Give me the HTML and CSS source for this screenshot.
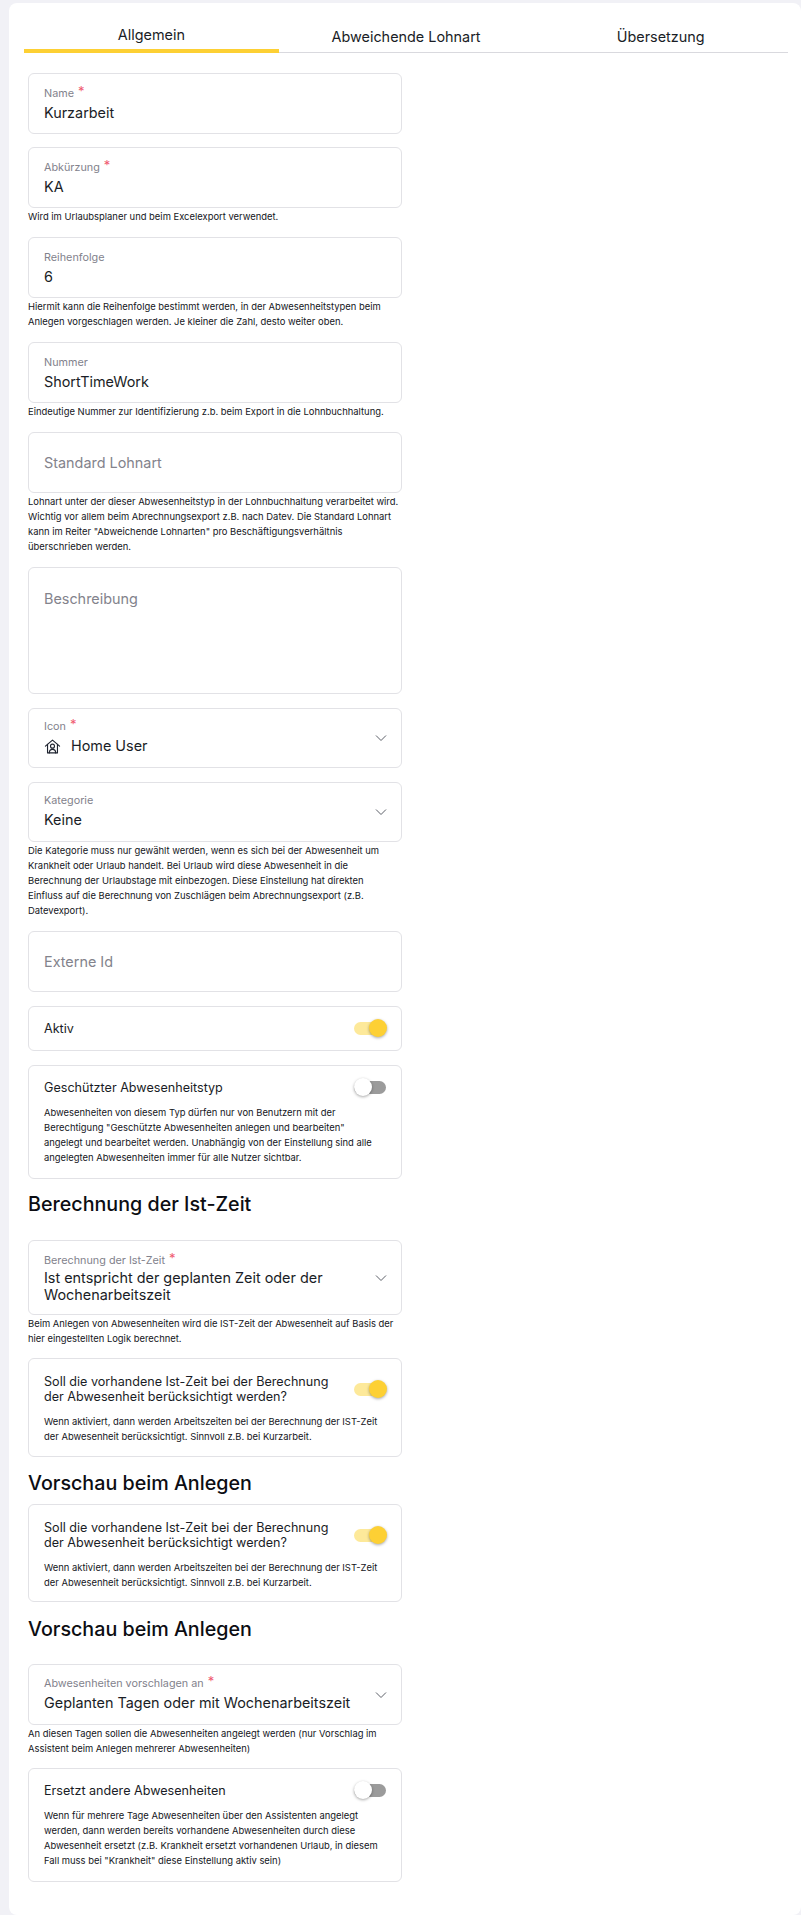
FILE: index.html
```html
<!DOCTYPE html>
<html lang="de">
<head>
<meta charset="utf-8">
<title>Abwesenheitstyp</title>
<link rel="stylesheet" href="styles.css">
</head>
<body>
<main class="card">
  <nav class="tabs">
    <a class="tab active">Allgemein</a>
    <a class="tab">Abweichende Lohnart</a>
    <a class="tab">Übersetzung</a>
  </nav>
  <form class="form">
    <div class="field"><span class="label">Name <i class="req">*</i></span><span class="value">Kurzarbeit</span></div>
    <div class="field mt13"><span class="label">Abkürzung <i class="req">*</i></span><span class="value">KA</span></div>
    <p class="help">Wird im Urlaubsplaner und beim Excelexport verwendet.</p>
    <div class="field mt13"><span class="label">Reihenfolge</span><span class="value">6</span></div>
    <p class="help">Hiermit kann die Reihenfolge bestimmt werden, in der Abwesenheitstypen beim Anlegen vorgeschlagen werden. Je kleiner die Zahl, desto weiter oben.</p>
    <div class="field mt13"><span class="label">Nummer</span><span class="value">ShortTimeWork</span></div>
    <p class="help">Eindeutige Nummer zur Identifizierung z.b. beim Export in die Lohnbuchhaltung.</p>
    <div class="field mt13 empty"><span class="placeholder">Standard Lohnart</span></div>
    <p class="help">Lohnart unter der dieser Abwesenheitstyp in der Lohnbuchhaltung verarbeitet wird. Wichtig vor allem beim Abrechnungsexport z.B. nach Datev. Die Standard Lohnart kann im Reiter "Abweichende Lohnarten" pro Beschäftigungsverhältnis überschrieben werden.</p>
    <div class="field mt13 area"><span class="placeholder">Beschreibung</span></div>
    <div class="field select mt14">
      <div><span class="label">Icon <i class="req">*</i></span>
      <span class="value with-icon">
        <svg class="home" viewBox="0 0 24 24" fill="none" stroke="#1f2430" stroke-width="1.600" stroke-linejoin="round" stroke-linecap="round"><path d="M2 11.500 12 3l10 8.500"/><path d="M5 9v12h14V9"/><circle cx="12" cy="11.500" r="2.800"/><path d="M7.500 21c0-3.500 2-5 4.500-5s4.500 1.500 4.500 5"/></svg>
        Home User</span></div>
      <svg class="chev" viewBox="0 0 12 8"><path d="M1 1.500 6 6.500l5-5"/></svg>
    </div>
    <div class="field select mt14">
      <div><span class="label">Kategorie</span><span class="value">Keine</span></div>
      <svg class="chev" viewBox="0 0 12 8"><path d="M1 1.500 6 6.500l5-5"/></svg>
    </div>
    <p class="help">Die Kategorie muss nur gewählt werden, wenn es sich bei der Abwesenheit um Krankheit oder Urlaub handelt. Bei Urlaub wird diese Abwesenheit in die Berechnung der Urlaubstage mit einbezogen. Diese Einstellung hat direkten<br>Einfluss auf die Berechnung von Zuschlägen beim Abrechnungsexport (z.B.<br>Datevexport).</p>
    <div class="field mt13 empty"><span class="placeholder">Externe Id</span></div>
    <div class="box row mt14"><span class="box-title">Aktiv</span><span class="toggle on"></span></div>
    <div class="box mt14 tall">
      <div class="row"><span class="box-title">Geschützter Abwesenheitstyp</span><span class="toggle"></span></div>
      <p class="box-text">Abwesenheiten von diesem Typ dürfen nur von Benutzern mit der Berechtigung "Geschützte Abwesenheiten anlegen und bearbeiten" angelegt und bearbeitet werden. Unabhängig von der Einstellung sind alle angelegten Abwesenheiten immer für alle Nutzer sichtbar.</p>
    </div>
    <h2 class="heading">Berechnung der Ist-Zeit</h2>
    <div class="field select multi">
      <div><span class="label">Berechnung der Ist-Zeit <i class="req">*</i></span><span class="value two">Ist entspricht der geplanten Zeit oder der Wochenarbeitszeit</span></div>
      <svg class="chev" viewBox="0 0 12 8"><path d="M1 1.500 6 6.500l5-5"/></svg>
    </div>
    <p class="help">Beim Anlegen von Abwesenheiten wird die IST-Zeit der Abwesenheit auf Basis der hier eingestellten Logik berechnet.</p>
    <div class="box mt12 mid h99">
      <div class="row"><span class="box-title wrap">Soll die vorhandene Ist-Zeit bei der Berechnung der Abwesenheit berücksichtigt werden?</span><span class="toggle on"></span></div>
      <p class="box-text">Wenn aktiviert, dann werden Arbeitszeiten bei der Berechnung der IST-Zeit der Abwesenheit berücksichtigt. Sinnvoll z.B. bei Kurzarbeit.</p>
    </div>
    <h2 class="heading small-gap">Vorschau beim Anlegen</h2>
    <div class="box mid">
      <div class="row"><span class="box-title wrap">Soll die vorhandene Ist-Zeit bei der Berechnung der Abwesenheit berücksichtigt werden?</span><span class="toggle on"></span></div>
      <p class="box-text">Wenn aktiviert, dann werden Arbeitszeiten bei der Berechnung der IST-Zeit der Abwesenheit berücksichtigt. Sinnvoll z.B. bei Kurzarbeit.</p>
    </div>
    <h2 class="heading last">Vorschau beim Anlegen</h2>
    <div class="field select h61">
      <div><span class="label">Abwesenheiten vorschlagen an <i class="req">*</i></span><span class="value">Geplanten Tagen oder mit Wochenarbeitszeit</span></div>
      <svg class="chev" viewBox="0 0 12 8"><path d="M1 1.500 6 6.500l5-5"/></svg>
    </div>
    <p class="help">An diesen Tagen sollen die Abwesenheiten angelegt werden (nur Vorschlag im Assistent beim Anlegen mehrerer Abwesenheiten)</p>
    <div class="box mt12 tall">
      <div class="row"><span class="box-title">Ersetzt andere Abwesenheiten</span><span class="toggle"></span></div>
      <p class="box-text">Wenn für mehrere Tage Abwesenheiten über den Assistenten angelegt werden, dann werden bereits vorhandene Abwesenheiten durch diese Abwesenheit ersetzt (z.B. Krankheit ersetzt vorhandenen Urlaub, in diesem Fall muss bei "Krankheit" diese Einstellung aktiv sein)</p>
    </div>
  </form>
</main>
</body>
</html>
```
FILE: styles.css
```css
* { box-sizing: border-box; }
html, body { margin: 0; padding: 0; }
body {
  background: #f1f1f6;
  font-family: Inter, "Liberation Sans", sans-serif;
  color: #1a1d26;
  padding: 3px 0 0 9px;
}
.card {
  background: #fff;
  border-radius: 8px;
  height: 1912px;
  padding: 12px 13px 0 15px;
}
.tabs {
  display: flex;
  width: 764px;
  height: 38px;
  border-bottom: 1px solid #d9d9de;
}
.tab {
  flex: 1;
  text-align: center;
  font-size: 14.400px;
  line-height: 20px;
  padding-top: 12px;
  color: #1a1d26;
}
.tab.active {
  padding-top: 10px;
  border-bottom: 4px solid #fdd034;
  height: 38px;
}
.form { width: 374px; margin: 20px 0 0 4px; }
.field, .box {
  border: 1px solid #e2e2e6;
  border-radius: 6px;
  background: #fff;
}
.field {
  height: 61px;
  padding: 12px 15px 0;
}
.label {
  display: block;
  font-size: 10.800px;
  line-height: 16px;
  color: #82828c;
}
.req { color: #ef5a70; font-style: normal; font-size: 13px; line-height: 0; vertical-align: 1px; margin-left: 1px; }
.value {
  display: block;
  font-size: 14.400px;
  line-height: 22px;
  color: #1a1d26;
}
.value.with-icon { display: flex; align-items: center; gap: 10px; }
.home { width: 17px; height: 17px; }
.placeholder {
  display: block;
  font-size: 14.400px;
  line-height: 22px;
  color: #83838c;
  padding-top: 7px;
}
.area { height: 127px; padding-top: 0; }
.area .placeholder { padding-top: 20px; }
.select { display: flex; justify-content: space-between; align-items: center; padding: 0 14px 0 15px; height: 60px; }
.select.h61 { height: 61px; }
.chev { width: 12px; height: 8px; flex: none; fill: none; stroke: #5c5f68; stroke-width: 1; }
.select.multi { height: 75px; }
.two { width: 300px; line-height: 17px; }
.mt12 { margin-top: 12px; }
.mt13 { margin-top: 13px; }
.mt14 { margin-top: 14px; }
.help {
  margin: 1px 0 0;
  font-size: 9.420px;
  line-height: 15px;
  color: #14161c;
}
.box { padding: 0 15px; }
.box.row { height: 45px; }
.row { display: flex; justify-content: space-between; align-items: center; }
.tall { height: 114px; padding-top: 14px; }
.mid { height: 98px; padding-top: 15px; }
.h99 { height: 99px; }
.box-title { font-size: 12.600px; line-height: 15px; color: #1a1d26; }
.wrap { width: 300px; }
.box-text { margin: 10px 0 0; font-size: 9.420px; line-height: 15px; color: #14161c; }
.toggle {
  position: relative;
  display: block;
  flex: none;
  width: 32px;
  height: 13px;
  border-radius: 7px;
  background: #9b9b9b;
}
.toggle::after {
  content: "";
  position: absolute;
  left: 0;
  top: -3px;
  width: 18px;
  height: 18px;
  border-radius: 50%;
  background: #fff;
  box-shadow: 0 1px 3px rgba(0,0,0,.35);
}
.toggle.on { background: #fde99a; }
.toggle.on::after { left: 15px; background: #fdd034; }
.heading {
  margin: 13px 0 24px;
  font-size: 19.700px;
  line-height: 24px;
  font-weight: 500;
  color: #0c0d12;
}
.small-gap { margin: 14px 0 9px; }
.last { margin: 15px 0 23px; }
```
